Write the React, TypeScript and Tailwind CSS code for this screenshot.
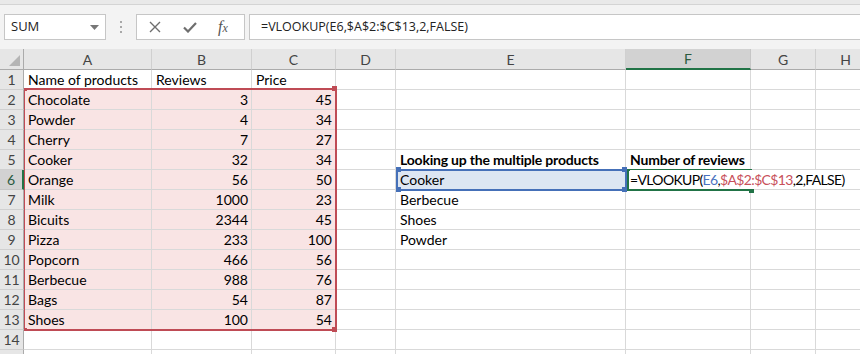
import React from "react";

const cellFont = { fontFamily: "Lato, 'Noto Sans', sans-serif" };
const uiFont = { fontFamily: "'Open Sans', 'Noto Sans', sans-serif" };

type Row = (string | number | null)[];

// columns: A B C D E F G H
const rows: Row[] = [
  ["Name of products", "Reviews", "Price", null, null, null, null, null],
  ["Chocolate", 3, 45, null, null, null, null, null],
  ["Powder", 4, 34, null, null, null, null, null],
  ["Cherry", 7, 27, null, null, null, null, null],
  ["Cooker", 32, 34, null, "Looking up the multiple products", "Number of reviews", null, null],
  ["Orange", 56, 50, null, "Cooker", null, null, null],
  ["Milk", 1000, 23, null, "Berbecue", null, null, null],
  ["Bicuits", 2344, 45, null, "Shoes", null, null, null],
  ["Pizza", 233, 100, null, "Powder", null, null, null],
  ["Popcorn", 466, 56, null, null, null, null, null],
  ["Berbecue", 988, 76, null, null, null, null, null],
  ["Bags", 54, 87, null, null, null, null, null],
  ["Shoes", 100, 54, null, null, null, null, null],
  [null, null, null, null, null, null, null, null],
  [null, null, null, null, null, null, null, null],
];

const letters = ["A", "B", "C", "D", "E", "F", "G", "H"];

function Formula() {
  return (
    <span className="relative z-10 whitespace-nowrap bg-white pr-1 tracking-[-0.65px]">
      =VLOOKUP(<span className="text-[#4a72c0]">E6</span>,
      <span className="text-[#c8505a]">$A$2:$C$13</span>,2,FALSE)
    </span>
  );
}

export default function App() {
  return (
    <div
      className="relative h-[354px] w-[860px] overflow-hidden bg-white text-black"
      style={cellFont}
    >
      {/* ribbon edge */}
      <div className="h-[5px] border-b border-[#d4d4d4] bg-[#e9e9e9]" />

      {/* formula bar */}
      <div className="flex h-[44px] items-center bg-[#f3f3f3]" style={uiFont}>
        <div className="ml-[4px] flex h-[26px] w-[102px] items-center justify-between border border-[#c6c6c6] bg-white pl-[6px] pr-[6px] text-[13px] text-[#222]">
          <span>SUM</span>
          <svg width="9" height="5" viewBox="0 0 9 5">
            <path d="M0 0 H9 L4.5 5 Z" fill="#777" />
          </svg>
        </div>
        <div className="ml-[14px] flex w-[2px] flex-col gap-[3px]">
          <span className="h-[2px] w-[2px] bg-[#a8a8a8]" />
          <span className="h-[2px] w-[2px] bg-[#a8a8a8]" />
          <span className="h-[2px] w-[2px] bg-[#a8a8a8]" />
        </div>
        <div className="ml-[14px] flex h-[26px] w-[109px] items-center border border-[#c6c6c6] bg-white">
          <svg className="ml-[12px]" width="12" height="12" viewBox="0 0 12 12">
            <path d="M1 1 L11 11 M11 1 L1 11" stroke="#6e6e6e" strokeWidth="1.4" />
          </svg>
          <svg className="ml-[22px]" width="14" height="11" viewBox="0 0 14 11">
            <path d="M1 5.5 L5 9.5 L13 1" stroke="#6e6e6e" strokeWidth="2.2" fill="none" />
          </svg>
          <span
            className="ml-[21px] text-[16px] italic leading-none text-[#555]"
            style={{ fontFamily: "'Liberation Serif', serif" }}
          >
            f<span className="text-[12px]">x</span>
          </span>
        </div>
        <div className="ml-[4px] -mr-[4px] flex h-[26px] flex-1 items-center border border-[#c6c6c6] bg-white pl-[11px] text-[12.5px] text-[#222]">
          =VLOOKUP(E6,$A$2:$C$13,2,FALSE)
        </div>
      </div>

      {/* sheet */}
      <div className="grid grid-cols-[24px_128px_100px_84px_60px_230px_125px_65px_60px]">
        {/* header row */}
        <div className="relative h-[21px] border-b border-r border-[#ababab] bg-[#e6e6e6]">
          <svg className="absolute bottom-[3px] right-[3px]" width="11" height="11" viewBox="0 0 11 11">
            <path d="M11 0 V11 H0 Z" fill="#b5b5b5" />
          </svg>
        </div>
        {letters.map((l) => (
          <div
            key={l}
            className={
              l === "F"
                ? "flex h-[21px] items-center justify-center border-b-2 border-r border-b-[#217346] border-r-[#c6c6c6] bg-[#d2d2d2] pb-[1px] text-[14px] text-[#2a5b3f]"
                : "flex h-[21px] items-center justify-center border-b border-r border-b-[#ababab] border-r-[#d0d0d0] bg-[#e6e6e6] text-[14px] text-[#444]"
            }
          >
            {l}
          </div>
        ))}

        {rows.map((row, ri) => {
          const rn = ri + 1;
          return (
            <React.Fragment key={rn}>
              <div
                className={
                  rn === 6
                    ? "flex h-[20px] items-center justify-center border-b border-r-2 border-b-[#c6c6c6] border-r-[#217346] bg-[#d2d2d2] text-[14px] text-[#2a5b3f]"
                    : "flex h-[20px] items-center justify-center border-b border-r border-b-[#d0d0d0] border-r-[#ababab] bg-[#e6e6e6] text-[14px] text-[#444]"
                }
              >
                {rn <= 14 ? rn : null}
              </div>
              {row.map((v, ci) => {
                const inRed = rn >= 2 && rn <= 13 && ci <= 2;
                const isE6 = rn === 6 && ci === 4;
                const isF6 = rn === 6 && ci === 5;
                const bold = rn === 5 && (ci === 4 || ci === 5);
                const num = typeof v === "number";
                return (
                  <div
                    key={ci}
                    className={[
                      "flex h-[20px] items-center overflow-visible whitespace-nowrap border-b border-r border-[#d9d9d9] text-[14px] leading-[19px]",
                      inRed ? "bg-[#f9e4e4]" : isE6 ? "bg-[#dce6f2]" : "bg-white",
                      num ? "justify-end pr-[3px]" : "pl-[4px]",
                      bold ? "font-bold tracking-[-0.2px]" : "",
                    ].join(" ")}
                  >
                    {isF6 ? <Formula /> : v}
                  </div>
                );
              })}
            </React.Fragment>
          );
        })}
      </div>

      {/* reference range A2:C13 */}
      <div className="pointer-events-none absolute left-[24px] top-[88px] h-[243px] w-[313px] border-y-2 border-l border-r-2 border-[#bf4b55]" />
      <div className="absolute left-[24px] top-[88px] h-[3px] w-[3px] bg-[#bf4b55]" />
      <div className="absolute left-[332px] top-[86px] h-[5px] w-[5px] bg-[#bf4b55]" />
      <div className="absolute left-[24px] top-[328px] h-[3px] w-[3px] bg-[#bf4b55]" />
      <div className="absolute left-[332px] top-[327px] h-[5px] w-[5px] bg-[#bf4b55]" />

      {/* reference E6 */}
      <div className="pointer-events-none absolute left-[396px] top-[169px] h-[22px] w-[231px] border-2 border-[#4570b8]" />
      <div className="absolute left-[396px] top-[167px] h-[5px] w-[5px] bg-[#4570b8]" />
      <div className="absolute left-[622px] top-[167px] h-[5px] w-[5px] bg-[#4570b8]" />
      <div className="absolute left-[396px] top-[187px] h-[5px] w-[5px] bg-[#4570b8]" />
      <div className="absolute left-[622px] top-[187px] h-[5px] w-[5px] bg-[#4570b8]" />

      {/* active cell F6 */}
      <div className="pointer-events-none absolute left-[627px] top-[169px] h-[22px] w-[125px] border-y-2 border-l-2 border-[#217346]" />
      <div className="absolute left-[749px] top-[188px] h-[5px] w-[5px] bg-[#217346]" />
    </div>
  );
}
